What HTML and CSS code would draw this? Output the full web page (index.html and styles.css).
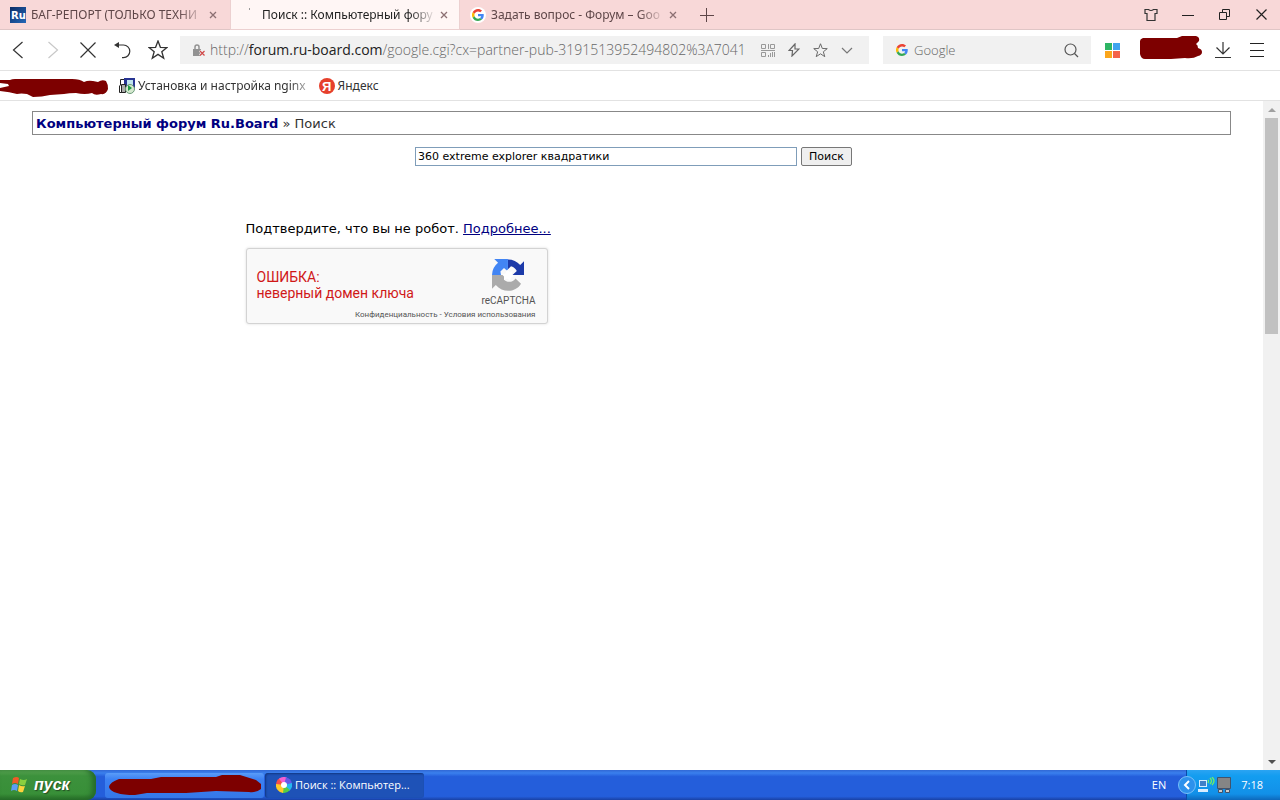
FILE: index.html
```html
<!DOCTYPE html>
<html lang="ru">
<head>
<meta charset="utf-8">
<title>Поиск :: Компьютерный форум Ru.Board</title>
<link rel="stylesheet" href="styles.css">
</head>
<body>
<svg class="defs" aria-hidden="true">
  <symbol id="google" viewBox="0 0 48 48">
    <path fill="#ea4335" d="M24 9.5c3.5 0 6.700 1.200 9.200 3.600l6.900-6.900C35.900 2.400 30.500 0 24 0 14.600 0 6.500 5.400 2.600 13.200l8 6.200C12.400 13.700 17.700 9.500 24 9.500z"/>
    <path fill="#4285f4" d="M47 24.500c0-1.600-.2-3.100-.4-4.500H24v9h12.900c-.6 3-2.300 5.500-4.800 7.200l7.700 6C44.400 38 47 31.800 47 24.500z"/>
    <path fill="#fbbc05" d="M10.500 28.600A14.500 14.500 0 0 1 10.500 19.400l-8-6.200a24 24 0 0 0 0 21.600z"/>
    <path fill="#34a853" d="M24 48c6.500 0 11.900-2.100 15.900-5.800l-7.700-6c-2.200 1.400-4.900 2.300-8.200 2.300-6.300 0-11.600-4.200-13.500-9.900l-8 6.200C6.500 42.600 14.600 48 24 48z"/>
  </symbol>
  <symbol id="star" viewBox="0 0 20 20"><path fill="none" stroke="currentColor" stroke-width="1.300" d="M10 1l2.400 6.300 6.600.2-5.200 4.200 1.900 6.500L10 14.400l-5.700 3.800 1.900-6.500L1 7.500l6.600-.2z"/></symbol>
  <symbol id="cross" viewBox="0 0 8 8"><path fill="none" stroke="currentColor" stroke-width="1.300" d="M1 1l6 6m0-6l-6 6"/></symbol>
</svg>

<header class="browser">
  <div class="tabs">
    <div class="tab">
      <svg class="fav" viewBox="0 0 16 16"><defs><linearGradient id="rb" x2="1" y2="1"><stop stop-color="#0b2c66"/><stop offset="1" stop-color="#2468b8"/></linearGradient></defs><path fill="url(#rb)" d="M0 0h16v16H0z"/><text class="fav-text" x="1" y="12">Ru</text></svg>
      <span class="tab-title">БАГ-РЕПОРТ (ТОЛЬКО ТЕХНИ</span>
      <button class="close" aria-label="Закрыть вкладку"><svg width="8" height="8"><use href="#cross"/></svg></button>
    </div>
    <div class="tab active">
      <svg class="fav" viewBox="0 0 16 16"><path fill="#999" d="M8 1h1v2H8z"/></svg>
      <span class="tab-title">Поиск :: Компьютерный фору</span>
      <button class="close" aria-label="Закрыть вкладку"><svg width="8" height="8"><use href="#cross"/></svg></button>
    </div>
    <div class="tab">
      <svg class="fav" viewBox="0 0 16 16"><circle cx="8" cy="8" r="8" fill="#fff"/><use href="#google" x="2" y="2" width="12" height="12"/></svg>
      <span class="tab-title">Задать вопрос - Форум – Goo</span>
      <button class="close" aria-label="Закрыть вкладку"><svg width="8" height="8"><use href="#cross"/></svg></button>
    </div>
    <button class="new-tab" aria-label="Новая вкладка"><svg width="14" height="14"><path d="M6.500 0v14M0 7.500h14" stroke="#5e4648"/></svg></button>
    <div class="window-buttons">
      <button aria-label="Оформление"><svg width="14" height="14" viewBox="0 0 14 14"><path fill="none" stroke="#333" stroke-width="1.200" d="M1 1.500h3.500q2.500 2 5 0H13v4h-2v7H3v-7H1z"/></svg></button>
      <button aria-label="Свернуть"><svg width="12" height="12"><path stroke="#222" d="M0 6.500h12"/></svg></button>
      <button aria-label="Восстановить"><svg width="11" height="11"><path fill="none" stroke="#222" d="M.5 3.500h7v7h-7zM3.500 3V.5h7v7H8"/></svg></button>
      <button aria-label="Закрыть"><svg width="11" height="11"><path stroke="#222" stroke-width="1.200" d="M.5.5l10 10m0-10l-10 10"/></svg></button>
    </div>
  </div>

  <div class="toolbar">
    <nav class="nav">
      <button aria-label="Назад"><svg width="12" height="18"><path d="M10.500 1l-9 8 9 8"/></svg></button>
      <button class="off" aria-label="Вперёд"><svg width="12" height="18"><path d="M1.500 1l9 8-9 8"/></svg></button>
      <button aria-label="Остановить"><svg width="16" height="16"><path d="M.5.500l15 15m0-15l-15 15"/></svg></button>
      <button aria-label="Вернуть"><svg width="18" height="18"><path d="M2 4h7.500a6.300 6.300 0 0 1 0 12.600H8"/><path class="solid" d="M0 4l5-3v6z"/></svg></button>
      <button aria-label="В избранное"><svg width="20" height="20"><use href="#star"/></svg></button>
    </nav>
    <div class="address">
      <svg width="14" height="13" viewBox="0 0 14 13"><path fill="#929292" d="M1 5h8v7H1z"/><path fill="none" stroke="#929292" stroke-width="1.500" d="M3 6V3a2 2 0 0 1 4 0v3"/><path stroke="#f1f1f1" stroke-width="3" d="M8 6.500l5 5m0-5l-5 5"/><path stroke="#d04848" stroke-width="1.200" d="M8 7l4.500 4.500m0-4.500L8 11.500"/></svg>
      <div class="url"><span>http://</span><b>forum.ru-board.com</b><span>/google.cgi?cx=partner-pub-3191513952494802%3A7041</span></div>
      <div class="address-tools">
        <button aria-label="QR-код"><svg width="14" height="14"><path fill="none" stroke="#999" d="M.5 1.500h4v4h-4zM9.500 1.500h4v4h-4zM.5 9.500h4v4h-4zM7.500 1v5M0 7.500h14M7.500 12v2M9.500 10v4M11.500 9v5M13.500 9v5"/></svg></button>
        <button aria-label="Турбо"><svg width="12" height="14"><path fill="none" stroke="#666" stroke-width="1.200" d="M7 1L1 7.500h3.500L4 13l7-7H7z"/></svg></button>
        <button aria-label="Добавить закладку"><svg width="15" height="15"><use href="#star"/></svg></button>
        <button aria-label="Показать список"><svg width="12" height="7"><path fill="none" stroke="#777" stroke-width="1.200" d="M1 1l5 5 5-5"/></svg></button>
      </div>
    </div>
    <div class="websearch">
      <svg width="12" height="12"><use href="#google"/></svg>
      <input type="text" placeholder="Google" aria-label="Поиск в Google">
      <button aria-label="Найти"><svg width="15" height="15"><circle cx="6.500" cy="6.500" r="5.500" fill="none" stroke="#555" stroke-width="1.200"/><path stroke="#555" stroke-width="1.200" d="M10.500 10.500L14 14"/></svg></button>
    </div>
    <button class="apps" aria-label="Приложения"><svg width="15" height="15"><path fill="#2db564" d="M0 0h7v7H0z"/><path fill="#3fa4ee" d="M8 0h7v7H8z"/><path fill="#fba61b" d="M0 8h7v7H0z"/><path fill="#f4624a" d="M8 8h7v7H8z"/></svg></button>
    <svg class="scribble" width="62" height="24" viewBox="0 0 62 24"><path fill="#7d0000" d="M3 2h34l5-2h14q4 1 3 5l-3 3q2 1 2 4 4 1 4 4t-4 4q-5 3-13 2l-14 1H5q-4 0-5-5 0-7 0-13 0-2 3-3z"/></svg>
    <button class="download" aria-label="Загрузки"><svg width="16" height="18"><path fill="none" stroke="#333" stroke-width="1.200" d="M8 1v12M1.500 6.500L8 13l6.500-6.500M0 16.500h16"/></svg></button>
    <button class="menu" aria-label="Меню"><svg width="14" height="14"><path stroke="#222" d="M0 .5h14M0 7.500h14M0 13.500h14"/></svg></button>
  </div>

  <div class="bookmarks">
    <svg class="redacted" width="108" height="20" viewBox="0 0 108 20"><path fill="#7d0000" d="M0 2h10q2-1 5-1h57q8 0 12 3 4-2 9-1l5 1q4-3 8-1 2 3 2 8-2 6-7 5-6 2-9-1-7 2-16 0-7 0-12 1l-14 1q-8 2-17 2l-6-3q-6-1-10 0-7-2-17-3v-3l9-2-1-2-8-1z"/></svg>
    <a href="#nginx"><svg width="16" height="16"><path fill="#283593" d="M5 0h11v10H5z"/><path fill="#bfe4ee" d="M8 2h6v5H8z"/><path fill="none" stroke="#222" d="M5 1.500H1.500v6M.5 7.500v7H6"/><path fill="#aaa" stroke="#222" d="M2.500 6.500h4v8h-4z"/><circle cx="11" cy="11" r="4.500" fill="#d5e8cf" stroke="#6a9a78"/><path fill="#1e9a42" d="M9 7l4 3-4 3z"/></svg><span class="fade">Установка и настройка nginx</span></a>
    <a href="#yandex"><svg width="16" height="16"><circle cx="8" cy="8" r="8" fill="#e6402c"/><text class="ya-text" x="3" y="13">Я</text></svg><span>Яндекс</span></a>
  </div>
</header>

<div class="viewport">
  <main class="page">
    <div class="crumbs"><a href="#home">Компьютерный форум Ru.Board</a> » Поиск</div>
    <form class="search">
      <input type="text" value="360 extreme explorer квадратики" aria-label="Поисковый запрос">
      <button type="button">Поиск</button>
    </form>
    <section class="verify">
      <p>Подтвердите, что вы не робот. <a href="#more">Подробнее...</a></p>
      <div class="captcha">
        <div class="captcha-error">ОШИБКА:<br>неверный домен ключа</div>
        <div class="captcha-brand">
          <svg width="32" height="32" viewBox="0 0 64 64"><path fill="#1c3aa9" d="M64 32V4.500l-7.600 7.600A32 32 0 0 0 31.900.9v19.500L38 14.400c6.200 1.800 9.500 5.200 11.600 9.400L41 32z"/><path fill="#4285f4" d="M31.900 0H4.500l7.600 7.600A32 32 0 0 0 0 32h18l-1.200-7 7.200-7 7.900 7z"/><path fill="#ababab" d="M0 32v27.500l7.600-7.600C21 68 47 68 58 49.500L47 39c-5 8-17 9-23.400 2L31 32z"/><path fill="#fff" d="M30 21l6 5 5-2-1 7 5 3-7 3-2 6-6-4-6 3v-7l-4-4 7-2z"/></svg>
          <span>reCAPTCHA</span>
        </div>
        <div class="captcha-links"><a href="#privacy">Конфиденциальность</a> - <a href="#terms">Условия использования</a></div>
      </div>
    </section>
  </main>
  <div class="scrollbar" aria-hidden="true">
    <svg width="17" height="17"><path fill="#a0a0a0" d="M5 11h8l-4-4z"/></svg>
    <div class="track"><div class="thumb"></div></div>
    <svg width="17" height="17"><path fill="#505050" d="M5 7h8l-4 4z"/></svg>
  </div>
</div>

<footer class="taskbar">
  <button class="start"><svg width="19" height="18" viewBox="0 0 19 18"><path fill="#f05a28" d="M3 2q4-2 6 0L8 8Q5 6 2 8z"/><path fill="#8bcf3f" d="M10 3q4 2 7 0l-2 6q-3 1-6-1z"/><path fill="#5c9df5" d="M2 9q3-2 6 0l-1 6q-3-2-6 0z"/><path fill="#ffd23c" d="M9 9q3 2 6 1l-2 6q-3 1-5-1z"/></svg>пуск</button>
  <button class="task" aria-label="Окно"><svg width="152" height="20" viewBox="0 0 152 20"><path fill="#7d0000" d="M0 12q1-5 10-8h32l10-2h55l6-2h18l16 5 5 4v5q-5 4-12 3l-33-1-30 2H38l-12 2q-12 0-18-2-7-2-8-6z"/></svg></button>
  <button class="task current"><svg width="16" height="16" viewBox="0 0 16 16"><path fill="#f34d4d" d="M8 8L0 8A8 8 0 0 1 4 1z"/><path fill="#f45fd0" d="M8 8L3 1.800A8 8 0 0 1 11 .6z"/><path fill="#6558e8" d="M8 8l2-7.700A8 8 0 0 1 16 7z"/><path fill="#26b8ef" d="M8 8l8-2a8 8 0 0 1-3 8z"/><path fill="#54cc46" d="M8 8l6 5a8 8 0 0 1-8 2.700z"/><path fill="#ffc928" d="M8 8l-1 8A8 8 0 0 1 0 7z"/><circle cx="8" cy="8" r="3" fill="#fff"/></svg>Поиск :: Компьютер...</button>
  <span class="lang">EN</span>
  <div class="tray">
    <button class="expand" aria-label="Показать значки"><svg width="18" height="18"><circle cx="9" cy="9" r="8.500" fill="#2d91ec" stroke="#78c1f8"/><path d="M11 5L7 9l4 4" fill="none" stroke="#fff" stroke-width="2"/></svg></button>
    <svg width="18" height="16"><path fill="#d9edff" d="M2 3h8v7H2zM1 12h10v3H1z"/><path fill="#4080c8" d="M3 4h6v5H3z"/><path fill="none" stroke="#70ef64" stroke-width="1.300" d="M11 3q1 1 0 3M13 1q3 3 0 6M15 0q4 4 0 8"/></svg>
    <svg width="16" height="16"><path fill="#858585" stroke="#42536b" d="M1.500.5h13v11h-13z"/><path fill="#ccc" stroke="#42536b" d="M2.500 12.500h4v3h-4zM9.500 12.500h4v3h-4z"/></svg>
    <time>7:18</time>
  </div>
</footer>
</body>
</html>
```

FILE: styles.css
```css
* { box-sizing: border-box; }
body { margin: 0; height: 100vh; display: flex; flex-direction: column; background: #fff; font: 12px/16px "Noto Sans", sans-serif; color: #333; overflow: hidden; }
button { border: 0; padding: 0; background: none; font: inherit; color: inherit; display: flex; align-items: center; justify-content: center; }
svg { display: block; flex: none; }
a { color: inherit; text-decoration: none; }
.defs { position: absolute; width: 0; height: 0; }

.tabs { display: flex; height: 30px; background: #f8d8d8; border-bottom: 1px solid #dfc6c6; }
.tab { width: 230px; flex: none; display: flex; align-items: center; padding: 0 12px 0 10px; color: #5e4648; }
.tab.active { background: #fff6f5; color: #222; height: 30px; border: 1px solid #ecd0d0; border-top: 0; }
.fav { width: 16px; height: 16px; margin-right: 5px; }
.fav-text { font: bold 10px "DejaVu Sans", sans-serif; fill: #fff; }
.tab-title { width: 174px; flex: none; white-space: nowrap; margin-right: 4px; mask-image: linear-gradient(to right, #000 85%, transparent); }
.close { width: 8px; height: 16px; color: #8c7073; }
.new-tab { width: 34px; }
.window-buttons { margin-left: auto; display: flex; }
.window-buttons button { width: 37px; }

.toolbar { display: flex; align-items: center; height: 41px; border-bottom: 1px solid #e2e2e2; }
.nav { display: flex; margin-right: 5px; }
.nav button { width: 35px; height: 28px; color: #333; }
.nav path { fill: none; stroke: #333; stroke-width: 1.200; }
.nav .off path { stroke: #c8c8c8; }
.nav .solid { fill: #333; stroke: none; }
.address { flex: 1; min-width: 0; height: 28px; display: flex; align-items: center; padding: 0 16px 0 12px; background: #f1f1f1; }
.url { flex: 1; min-width: 0; overflow: hidden; white-space: nowrap; font: 300 14px/20px "Open Sans", sans-serif; color: #666; margin-left: 4px; }
.url b { font-weight: 400; color: #222; }
.address-tools { display: flex; align-items: center; gap: 13px; color: #666; }
.websearch { width: 208px; height: 28px; display: flex; align-items: center; margin-left: 14px; padding: 0 12px 0 13px; background: #f1f1f1; }
.websearch input { flex: 1; min-width: 0; border: 0; padding: 0; margin-left: 6px; background: none; font: 300 13px/18px "Open Sans", sans-serif; }
.websearch input::placeholder { color: #666; }
.apps { margin-left: 14px; }
.scribble { margin-left: 20px; margin-bottom: 4px; }
.download { margin-left: 13px; }
.menu { margin: 0 16px 0 19px; }

.bookmarks { display: flex; align-items: center; height: 30px; border-bottom: 1px solid #e2e2e2; }
.redacted { margin: 4px 11px 0 0; }
.bookmarks a { display: flex; align-items: center; gap: 3px; margin-right: 13px; white-space: nowrap; }
.fade { mask-image: linear-gradient(to right, #000 90%, rgba(0, 0, 0, .4)); }
.ya-text { font: bold 13px "Liberation Sans", sans-serif; fill: #fff; }

.viewport { flex: 1; min-height: 0; display: flex; }
.page { flex: 1; min-width: 0; padding: 10px 32px; font: 13px/18px "DejaVu Sans", sans-serif; color: #000; }
.crumbs { border: 1px solid #888; padding: 3px 3px 1px; color: #333; }
.crumbs a { font-weight: 700; color: #000080; }
.search { display: flex; justify-content: center; gap: 4px; margin-top: 12px; padding-left: 4px; }
.search input { width: 382px; height: 19px; border: 1px solid #7f9db9; padding: 0 2px; font: 11px/16px "DejaVu Sans", sans-serif; color: #000; }
.search button { width: 51px; height: 19px; border: 1px solid #777; border-radius: 2px; background: #efefef; font-size: 11px; color: #000; }
.verify { max-width: 772px; margin: 54px auto 0; }
.verify p { margin: 0 0 10px; }
.verify p a { color: #000080; text-decoration: underline; }
.captcha { width: 302px; height: 76px; display: grid; grid-template-columns: 1fr auto; padding: 10px 11px 3px 10px; border: 1px solid #d3d3d3; border-radius: 3px; background: #f9f9f9; box-shadow: 0 0 3px #ddd; font-family: Roboto, sans-serif; }
.captcha-error { padding-top: 10px; font-size: 14px; line-height: 16px; color: #d01818; }
.captcha-brand { display: flex; flex-direction: column; align-items: center; gap: 2px; font-size: 10px; line-height: 16px; color: #555; }
.captcha-links { grid-column: 1 / 3; text-align: right; font-size: 8px; line-height: 12px; color: #555; }
.scrollbar { width: 17px; display: flex; flex-direction: column; background: #f1f1f1; }
.track { flex: 1; padding: 0 2px; }
.thumb { height: 34%; background: #c1c1c1; }

.taskbar { height: 30px; display: flex; align-items: center; color: #fff; font: 11px/14px "Open Sans", sans-serif; background: linear-gradient(#3168d5, #3a80ee 10%, #245edb 22%, #245edb 88%, #1941a5); }
.start { width: 96px; height: 30px; justify-content: flex-start; gap: 5px; padding-left: 10px; border-radius: 0 9px 9px 0; background: linear-gradient(#5eac56, #3c913c 20%, #388f38 80%, #266d26); box-shadow: inset -4px 0 5px #266b2b; font: italic bold 16px/20px "Liberation Sans", sans-serif; text-shadow: 1px 1px 1px #234d22; }
.task { width: 159px; height: 25px; border-radius: 3px; margin-left: 9px; background: linear-gradient(#5a9cf8, #3c81f3 25%, #3578e8); }
.task.current { justify-content: flex-start; gap: 3px; margin-left: 1px; padding-left: 11px; background: #1e52b7; box-shadow: inset 1px 1px 2px #123782; }
.lang { margin-left: auto; margin-right: 12px; }
.tray { height: 30px; display: flex; align-items: center; gap: 1px; padding-right: 17px; background: linear-gradient(#2ba4f2, #139df0 20%, #1290e8 80%, #0d68bb); border-left: 1px solid #0b4ca8; margin-left: 8px; }
.expand { margin-left: -9px; }
.tray time { margin-left: 8px; }
```
